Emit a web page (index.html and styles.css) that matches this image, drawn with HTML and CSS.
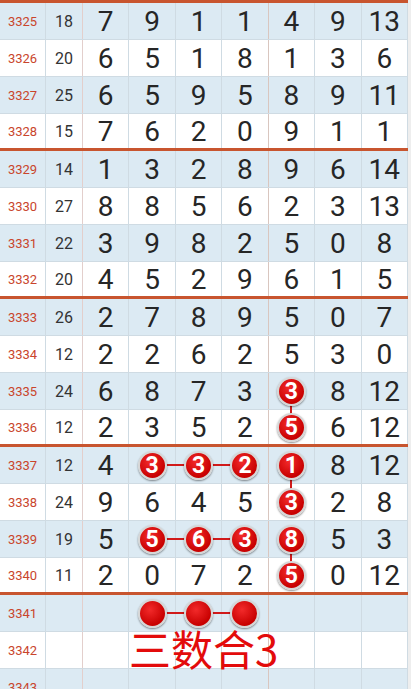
FILE: index.html
```html
<!DOCTYPE html>
<html>
<head>
  <meta charset="UTF-8">
  <title>走势图</title>
  <link rel="stylesheet" href="styles.css">
</head>
<body>
  <div class="chart">
    <div class="row"><div class="c p">3325</div><div class="c s">18</div><div class="c n">7</div><div class="c n">9</div><div class="c n">1</div><div class="c n">1</div><div class="c n">4</div><div class="c n">9</div><div class="c n">13</div></div>
    <div class="row"><div class="c p">3326</div><div class="c s">20</div><div class="c n">6</div><div class="c n">5</div><div class="c n">1</div><div class="c n">8</div><div class="c n">1</div><div class="c n">3</div><div class="c n">6</div></div>
    <div class="row"><div class="c p">3327</div><div class="c s">25</div><div class="c n">6</div><div class="c n">5</div><div class="c n">9</div><div class="c n">5</div><div class="c n">8</div><div class="c n">9</div><div class="c n">11</div></div>
    <div class="row"><div class="c p">3328</div><div class="c s">15</div><div class="c n">7</div><div class="c n">6</div><div class="c n">2</div><div class="c n">0</div><div class="c n">9</div><div class="c n">1</div><div class="c n">1</div></div>

    <div class="row"><div class="c p">3329</div><div class="c s">14</div><div class="c n">1</div><div class="c n">3</div><div class="c n">2</div><div class="c n">8</div><div class="c n">9</div><div class="c n">6</div><div class="c n">14</div></div>
    <div class="row"><div class="c p">3330</div><div class="c s">27</div><div class="c n">8</div><div class="c n">8</div><div class="c n">5</div><div class="c n">6</div><div class="c n">2</div><div class="c n">3</div><div class="c n">13</div></div>
    <div class="row"><div class="c p">3331</div><div class="c s">22</div><div class="c n">3</div><div class="c n">9</div><div class="c n">8</div><div class="c n">2</div><div class="c n">5</div><div class="c n">0</div><div class="c n">8</div></div>
    <div class="row"><div class="c p">3332</div><div class="c s">20</div><div class="c n">4</div><div class="c n">5</div><div class="c n">2</div><div class="c n">9</div><div class="c n">6</div><div class="c n">1</div><div class="c n">5</div></div>

    <div class="row"><div class="c p">3333</div><div class="c s">26</div><div class="c n">2</div><div class="c n">7</div><div class="c n">8</div><div class="c n">9</div><div class="c n">5</div><div class="c n">0</div><div class="c n">7</div></div>
    <div class="row"><div class="c p">3334</div><div class="c s">12</div><div class="c n">2</div><div class="c n">2</div><div class="c n">6</div><div class="c n">2</div><div class="c n">5</div><div class="c n">3</div><div class="c n">0</div></div>
    <div class="row"><div class="c p">3335</div><div class="c s">24</div><div class="c n">6</div><div class="c n">8</div><div class="c n">7</div><div class="c n">3</div><div class="c n ld"><span class="ball">3</span></div><div class="c n">8</div><div class="c n">12</div></div>
    <div class="row"><div class="c p">3336</div><div class="c s">12</div><div class="c n">2</div><div class="c n">3</div><div class="c n">5</div><div class="c n">2</div><div class="c n"><span class="ball">5</span></div><div class="c n">6</div><div class="c n">12</div></div>

    <div class="row"><div class="c p">3337</div><div class="c s">12</div><div class="c n">4</div><div class="c n lr"><span class="ball">3</span></div><div class="c n lr"><span class="ball">3</span></div><div class="c n"><span class="ball">2</span></div><div class="c n ld"><span class="ball">1</span></div><div class="c n">8</div><div class="c n">12</div></div>
    <div class="row"><div class="c p">3338</div><div class="c s">24</div><div class="c n">9</div><div class="c n">6</div><div class="c n">4</div><div class="c n">5</div><div class="c n"><span class="ball">3</span></div><div class="c n">2</div><div class="c n">8</div></div>
    <div class="row"><div class="c p">3339</div><div class="c s">19</div><div class="c n">5</div><div class="c n lr"><span class="ball">5</span></div><div class="c n lr"><span class="ball">6</span></div><div class="c n"><span class="ball">3</span></div><div class="c n ld"><span class="ball">8</span></div><div class="c n">5</div><div class="c n">3</div></div>
    <div class="row"><div class="c p">3340</div><div class="c s">11</div><div class="c n">2</div><div class="c n">0</div><div class="c n">7</div><div class="c n">2</div><div class="c n"><span class="ball">5</span></div><div class="c n">0</div><div class="c n">12</div></div>

    <div class="row"><div class="c p">3341</div><div class="c s"></div><div class="c n"></div><div class="c n lr"><span class="ball"></span></div><div class="c n lr"><span class="ball"></span></div><div class="c n"><span class="ball"></span></div><div class="c n"></div><div class="c n"></div><div class="c n"></div></div>
    <div class="row"><div class="c p">3342</div><div class="c s"></div><div class="c n"></div><div class="c n"></div><div class="c n"></div><div class="c n"></div><div class="c n"></div><div class="c n"></div><div class="c n"></div></div>
    <div class="row"><div class="c p">3343</div><div class="c s"></div><div class="c n"></div><div class="c n"></div><div class="c n"></div><div class="c n"></div><div class="c n"></div><div class="c n"></div><div class="c n"></div></div>

    <div class="tag">三数合3</div>
  </div>
</body>
</html>
```

FILE: styles.css
```css
body {
  margin: 0;
  background-color: #eeeeee;
  font-family: Roboto, "Noto Sans", sans-serif;
}
* {
  box-sizing: border-box;
}
.chart {
  position: relative;
  width: 408px;
  border-top: 3px solid #c8552f;
  overflow: hidden;
}
.row {
  display: grid;
  grid-template-columns: 46px 37px repeat(7, 1fr);
  height: 37px;
  background-color: #ffffff;
  border-bottom: 1px solid #cfdbe3;
}
.row:nth-child(odd) {
  background-color: #dceaf3;
}
.row:nth-child(4n) {
  border-bottom: 3px solid #c8552f;
}
.c {
  position: relative;
  display: flex;
  align-items: center;
  justify-content: center;
  border-right: 1px solid #cfdbe3;
}
.p {
  font-size: 13px;
  color: #c9452c;
}
.s {
  font-size: 16px;
  color: #333333;
  border-right-color: #e3cfcc;
}
.n {
  font-size: 28px;
  color: #262626;
}
.n:nth-child(6) {
  border-right-color: #d9c6bf;
}
.ball {
  position: relative;
  z-index: 2;
  display: flex;
  align-items: center;
  justify-content: center;
  width: 29px;
  height: 29px;
  border-radius: 50%;
  border: 2px solid #d6d6d6;
  background: radial-gradient(circle at 40% 35%, #f22a2a, #c80000 70%);
  box-shadow: 0 1px 2px rgba(0, 0, 0, 0.45);
  color: #ffffff;
  font-size: 23px;
  font-weight: bold;
}
.lr::before {
  content: "";
  position: absolute;
  z-index: 1;
  left: 50%;
  top: 50%;
  width: calc(100% + 1px);
  height: 2px;
  margin-top: -1px;
  background-color: #d11a1a;
}
.ld::before {
  content: "";
  position: absolute;
  z-index: 1;
  left: 50%;
  top: 50%;
  width: 2px;
  height: 37px;
  margin-left: -1px;
  background-color: #d11a1a;
}
.tag {
  position: absolute;
  z-index: 3;
  left: 129px;
  top: 624px;
  font-family: "Noto Sans CJK SC", "Noto Sans", sans-serif;
  font-size: 42px;
  line-height: 42px;
  color: #e30b0b;
}
```
